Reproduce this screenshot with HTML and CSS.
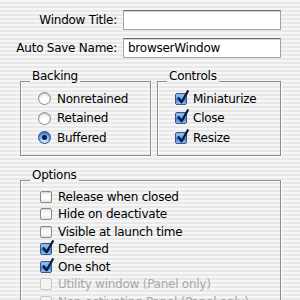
FILE: index.html
```html
<!DOCTYPE html>
<html>
<head>
<meta charset="utf-8">
<link rel="stylesheet" href="styles.css">
</head>
<body>
<div class="panel">
  <div class="field-row">
    <label class="field-label">Window Title:</label>
    <div class="textfield"></div>
  </div>
  <div class="field-row">
    <label class="field-label">Auto Save Name:</label>
    <div class="textfield">browserWindow</div>
  </div>
  <div class="groups">
    <div class="group backing">
      <span class="group-title">Backing</span>
      <div class="item"><span class="radio"></span>Nonretained</div>
      <div class="item"><span class="radio"></span>Retained</div>
      <div class="item"><span class="radio on"></span>Buffered</div>
    </div>
    <div class="group controls">
      <span class="group-title">Controls</span>
      <div class="item"><span class="check on"><svg viewBox="0 0 13 15"><path d="M2.6 8.2 L5.6 12.2 L11.8 1.2"/></svg></span>Miniaturize</div>
      <div class="item"><span class="check on"><svg viewBox="0 0 13 15"><path d="M2.6 8.2 L5.6 12.2 L11.8 1.2"/></svg></span>Close</div>
      <div class="item"><span class="check on"><svg viewBox="0 0 13 15"><path d="M2.6 8.2 L5.6 12.2 L11.8 1.2"/></svg></span>Resize</div>
    </div>
  </div>
  <div class="group options">
    <span class="group-title">Options</span>
    <div class="item"><span class="check"></span>Release when closed</div>
    <div class="item"><span class="check"></span>Hide on deactivate</div>
    <div class="item"><span class="check"></span>Visible at launch time</div>
    <div class="item"><span class="check on"><svg viewBox="0 0 13 15"><path d="M2.6 8.2 L5.6 12.2 L11.8 1.2"/></svg></span>Deferred</div>
    <div class="item"><span class="check on"><svg viewBox="0 0 13 15"><path d="M2.6 8.2 L5.6 12.2 L11.8 1.2"/></svg></span>One shot</div>
    <div class="item disabled"><span class="check"></span>Utility window (Panel only)</div>
    <div class="item disabled"><span class="check"></span>Non-activating Panel (Panel only)</div>
  </div>
</div>
</body>
</html>
```
FILE: styles.css
```css
* { box-sizing: border-box; }
html, body { margin: 0; height: 100%; }
body {
  font-family: "DejaVu Sans", sans-serif;
  font-size: 12px;
  letter-spacing: -0.25px;
  color: #000;
  background: repeating-linear-gradient(#f6f6f6 0 2px, #e8e8e8 2px 4px) fixed;
  overflow: hidden;
}
.panel { padding: 10px 19px 0 0; }
.field-row {
  display: grid;
  grid-template-columns: 117px 1fr;
  column-gap: 6px;
  align-items: center;
  height: 20px;
}
.field-row + .field-row { margin-top: 8px; }
.field-label { text-align: right; white-space: nowrap; }
.textfield {
  height: 20px;
  background: #fff;
  border: 1px solid #a4a4a4;
  border-top-color: #6e6e6e;
  box-shadow: inset 0 1px 0 #d0d0d0;
  padding: 0 4px;
  line-height: 18px;
}
.groups { display: flex; gap: 6px; margin: 23px 0 0 20px; }
.group {
  position: relative;
  border: 1px solid #8c8c8c;
  box-shadow: 1px 1px 0 rgba(255,255,255,0.7), inset 1px 1px 0 rgba(255,255,255,0.7);
}
.backing { width: 131px; height: 75px; padding: 7px 0 0 17px; }
.controls { flex: 1; height: 75px; padding: 7px 0 0 17px; }
.options { margin: 24px 0 0 20px; height: 140px; padding: 7px 0 0 19px; }
.group-title {
  position: absolute;
  left: 9px;
  top: -13px;
  padding: 0 2px;
  line-height: 14px;
  background: repeating-linear-gradient(#f6f6f6 0 2px, #e8e8e8 2px 4px) fixed;
}
.item {
  display: flex;
  align-items: center;
  gap: 6px;
  height: 19.5px;
  white-space: nowrap;
}
.options .item { height: 17.5px; }
.disabled { color: #a8a8a8; }
.radio {
  flex: none;
  width: 13px;
  height: 13px;
  border-radius: 50%;
  border: 1px solid #8a8a8a;
  background: radial-gradient(circle at 50% 75%, #ffffff 0 35%, #ececec 70%, #d6d6d6 100%);
  box-shadow: inset 0 1px 1px rgba(0,0,0,0.15);
  position: relative;
}
.radio.on {
  border-color: #2d4f86;
  background: radial-gradient(circle at 50% 80%, #bfe0ff 0 20%, #5c9ee8 60%, #2a6acb 100%);
}
.radio.on::after {
  content: "";
  position: absolute;
  left: 3px; top: 3px;
  width: 5px; height: 5px;
  border-radius: 50%;
  background: #0e1f3e;
}
.check {
  flex: none;
  position: relative;
  width: 12px;
  height: 12px;
  border-radius: 2px;
  border: 1px solid #8a8a8a;
  background: linear-gradient(#f0f0f0, #ffffff 60%, #e4e4e4);
  box-shadow: inset 0 1px 1px rgba(0,0,0,0.12);
}
.disabled .check { border-color: #c6c6c6; background: #f3f3f3; box-shadow: none; }
.check.on {
  border-color: #34588e;
  background: linear-gradient(#a9d0f7, #5d9be2 50%, #3e80d4 55%, #8fc2f3);
}
.check svg {
  position: absolute;
  left: 0; top: -4px;
  width: 13px; height: 15px;
  overflow: visible;
}
.check path {
  fill: none;
  stroke: #0c1b3d;
  stroke-width: 2.3;
  stroke-linecap: round;
  stroke-linejoin: round;
}
```
